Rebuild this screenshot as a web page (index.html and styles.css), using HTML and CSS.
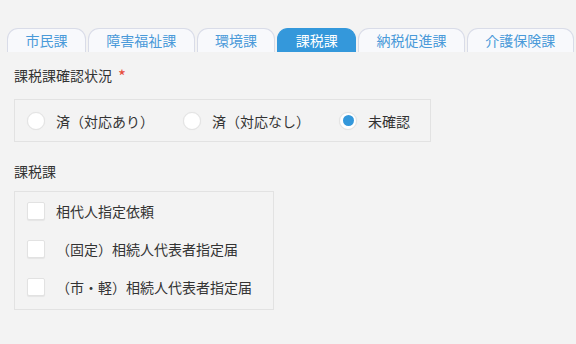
FILE: index.html
```html
<!DOCTYPE html>
<html lang="ja">
<head>
    <meta charset="UTF-8">
    <meta name="viewport" content="width=device-width, initial-scale=1.0">
    <title>課税課</title>
    <link rel="stylesheet" href="styles.css">
</head>
<body>

    <div class="tabs">
        <div class="tab">市民課</div>
        <div class="tab">障害福祉課</div>
        <div class="tab">環境課</div>
        <div class="tab active">課税課</div>
        <div class="tab">納税促進課</div>
        <div class="tab">介護保険課</div>
        <div class="tab tab-more"></div>
    </div>

    <div class="content">
        <div class="field-label">課税課確認状況<span class="required">*</span></div>
        <div class="group radio-group">
            <label class="option">
                <span class="radio"></span>
                <span>済（対応あり）</span>
            </label>
            <label class="option">
                <span class="radio"></span>
                <span>済（対応なし）</span>
            </label>
            <label class="option">
                <span class="radio checked"></span>
                <span>未確認</span>
            </label>
        </div>

        <div class="field-label second">課税課</div>
        <div class="group check-group">
            <label class="option">
                <span class="checkbox"></span>
                <span>相代人指定依頼</span>
            </label>
            <label class="option">
                <span class="checkbox"></span>
                <span>（固定）相続人代表者指定届</span>
            </label>
            <label class="option">
                <span class="checkbox"></span>
                <span>（市・軽）相続人代表者指定届</span>
            </label>
        </div>
    </div>

</body>
</html>
```

FILE: styles.css
```css
body {
    font-family: "Noto Sans CJK JP", "Noto Sans", sans-serif;
    font-size: 14px;
    background-color: #f3f3f3;
    color: #333333;
    margin: 0;
    padding: 0;
    overflow: hidden;
}

/* tab strip */
.tabs {
    display: flex;
    gap: 2px;
    padding: 28px 0 0 7px;
    white-space: nowrap;
}
.tab {
    flex: none;
    height: 23px;
    line-height: 23px;
    padding: 0 17.4px;
    border: 1px solid #d9dce8;
    border-bottom: none;
    border-radius: 11px 11px 0 0;
    background-color: #f8f9fc;
    color: #4a9ad9;
}
.tab.active {
    background-color: #3498db;
    border-color: #3498db;
    color: #ffffff;
}
.tab-more {
    width: 40px;
}

.content {
    padding: 0 14px;
}
.field-label {
    margin-top: 13px;
    line-height: 20px;
}
.field-label.second {
    margin-top: 19px;
}
.required {
    color: #e74c3c;
    font-size: 17px;
    margin-left: 6px;
    vertical-align: -2px;
}

/* bordered groups */
.group {
    display: inline-flex;
    border: 1px solid #e2e2e2;
    margin-top: 13px;
}
.radio-group {
    height: 41px;
    align-items: center;
    gap: 29px;
    padding: 0 20px 0 12px;
}
.check-group {
    flex-direction: column;
    margin-top: 10px;
    padding: 0 21px 3px 12px;
}
.check-group .option {
    height: 38px;
}

.option {
    display: flex;
    align-items: center;
    gap: 11px;
}

.radio {
    width: 18px;
    height: 18px;
    box-sizing: border-box;
    border: 1px solid #e4e4e4;
    border-radius: 50%;
    background-color: #ffffff;
    box-shadow: 0 0 1px rgba(0, 0, 0, 0.08);
    display: flex;
    align-items: center;
    justify-content: center;
}
.radio.checked::after {
    content: "";
    width: 11px;
    height: 11px;
    border-radius: 50%;
    background-color: #3498db;
}

.checkbox {
    width: 18px;
    height: 18px;
    box-sizing: border-box;
    border: 1px solid #e2e2e2;
    border-radius: 2px;
    background-color: #ffffff;
    box-shadow: 0 1px 1px rgba(0, 0, 0, 0.06);
}
```
